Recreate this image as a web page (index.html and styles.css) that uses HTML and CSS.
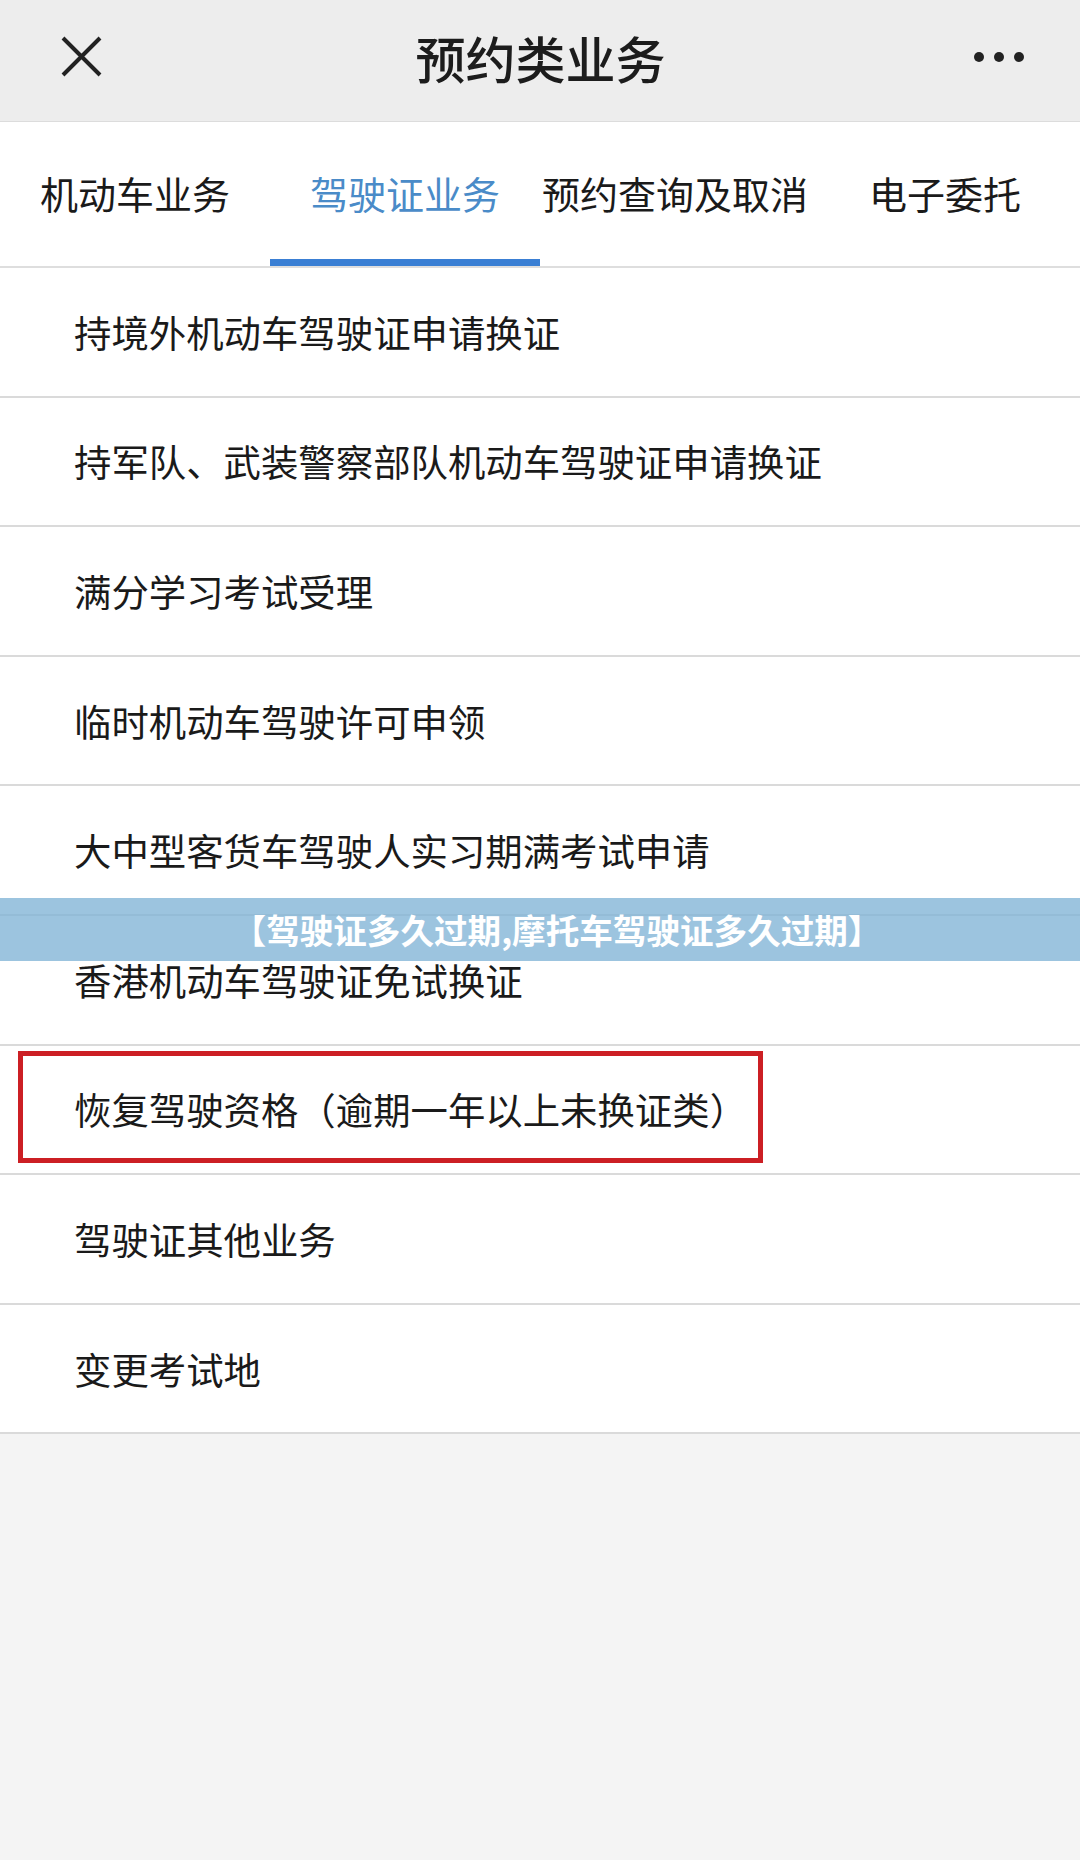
FILE: index.html
```html
<!DOCTYPE html>
<html>
  <head>
    <meta charset="utf-8">
    <title>预约类业务</title>
    <link rel="stylesheet" href="styles.css">
  </head>
  <body>
    <div class="page">
      <div class="topbar">
        <div class="topbar-left">
          <svg class="close" width="41" height="41" viewBox="0 0 41 41">
            <path d="M2 2 L39 39 M39 2 L2 39" stroke="#222" stroke-width="4" fill="none"/>
          </svg>
        </div>
        <div class="title">预约类业务</div>
        <div class="topbar-right">
          <svg class="more" width="50" height="12" viewBox="0 0 50 12">
            <circle cx="5" cy="6" r="5" fill="#222"/>
            <circle cx="25" cy="6" r="5" fill="#222"/>
            <circle cx="45" cy="6" r="5" fill="#222"/>
          </svg>
        </div>
      </div>

      <div class="tabs">
        <div class="tab">机动车业务</div>
        <div class="tab active">驾驶证业务</div>
        <div class="tab">预约查询及取消</div>
        <div class="tab">电子委托</div>
      </div>

      <ul class="list">
        <li>持境外机动车驾驶证申请换证</li>
        <li>持军队、武装警察部队机动车驾驶证申请换证</li>
        <li>满分学习考试受理</li>
        <li>临时机动车驾驶许可申领</li>
        <li>大中型客货车驾驶人实习期满考试申请</li>
        <li>香港机动车驾驶证免试换证</li>
        <li class="marked">恢复驾驶资格（逾期一年以上未换证类）</li>
        <li>驾驶证其他业务</li>
        <li>变更考试地</li>
      </ul>

      <div class="banner">【驾驶证多久过期,摩托车驾驶证多久过期】</div>
    </div>
  </body>
</html>
```

FILE: styles.css
```css
body {
  margin: 0;
  padding: 0;
  background: #f4f4f4;
  font-family: "Noto Sans CJK SC", "Noto Sans", sans-serif;
  color: #1a1a1a;
}

.page {
  position: relative;
  width: 1080px;
  min-height: 1860px;
}

.topbar {
  display: grid;
  grid-template-columns: 1fr auto 1fr;
  align-items: center;
  height: 113px;
  padding: 0 56px 8px 61px;
  background: #ededed;
  border-bottom: 1px solid #dcdcdc;
}

.topbar-right {
  display: flex;
  justify-content: flex-end;
}

.close,
.more {
  display: block;
}

.title {
  font-size: 50px;
  font-weight: 500;
  color: #1c1c1c;
  line-height: 1;
  padding-right: 4px;
}

.tabs {
  display: grid;
  grid-template-columns: repeat(4, 1fr);
  height: 144px;
  background: #fff;
  border-bottom: 2px solid #dedede;
}

.tab {
  display: flex;
  align-items: center;
  justify-content: center;
  font-size: 38px;
  padding-bottom: 4px;
  box-sizing: border-box;
}

.tab.active {
  color: #4a8bc8;
  border-bottom: 7px solid #3a7fd4;
  padding-top: 7px;
}

.list {
  list-style: none;
  margin: 0;
  padding: 0;
  background: #fff;
}

.list li {
  position: relative;
  display: flex;
  align-items: center;
  height: 127.6px;
  padding-left: 74px;
  font-size: 37.4px;
  border-bottom: 2px solid #dadada;
}

/* red frame drawn around the highlighted entry */
.list li.marked::after {
  content: "";
  position: absolute;
  left: 18px;
  top: 5px;
  width: 735px;
  height: 102px;
  border: 5px solid #cc1f24;
}

.banner {
  position: absolute;
  left: 0;
  top: 898px;
  width: 100%;
  height: 63px;
  display: flex;
  align-items: center;
  justify-content: center;
  padding-left: 34px;
  box-sizing: border-box;
  background: rgba(128, 180, 214, 0.78);
  color: #fff;
  font-size: 33.6px;
  font-weight: 700;
}
```
